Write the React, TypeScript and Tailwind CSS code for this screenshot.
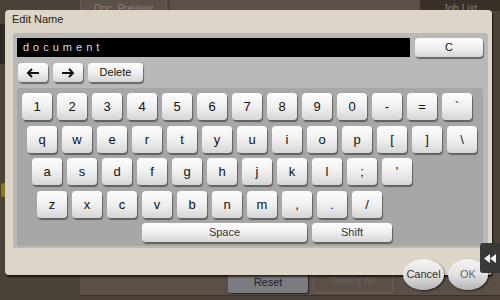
import React from "react";

const rows: { keys: string[]; pl: string; mt: string }[] = [
  { keys: ["1", "2", "3", "4", "5", "6", "7", "8", "9", "0", "-", "=", "`"], pl: "pl-[5px]", mt: "mt-[5px]" },
  { keys: ["q", "w", "e", "r", "t", "y", "u", "i", "o", "p", "[", "]", "\\"], pl: "pl-[10px]", mt: "mt-[6px]" },
  { keys: ["a", "s", "d", "f", "g", "h", "j", "k", "l", ";", "'"], pl: "pl-[15px]", mt: "mt-[5px]" },
  { keys: ["z", "x", "c", "v", "b", "n", "m", ",", ".", "/"], pl: "pl-[20px]", mt: "mt-[6px]" },
];

const keyCls =
  "flex items-center justify-center rounded-[4px] bg-gradient-to-b from-[#fdfdfd] via-[#f0f0f0] to-[#d6d6d6] shadow-[1px_2px_1px_rgba(40,40,40,0.55)] text-[#111]";

function Key({ label }: { label: string }) {
  return <div className={`${keyCls} w-[30px] h-[27px] text-[13px]`}>{label}</div>;
}

export default function App() {
  return (
    <div
      className="relative w-[500px] h-[300px] overflow-hidden bg-[#4b4239]"
      style={{ fontFamily: '"Liberation Sans", Arial, sans-serif' }}
    >
      {/* background app content */}
      <div className="absolute left-0 top-[24px] w-[6px] h-[40px] bg-[#2e2924]" />
      <div className="absolute left-[80px] top-0 w-[87px] h-[11px] bg-[#5a5048] border-x border-b border-dashed border-[#6d6259] text-[10px] text-[#8a8077] flex justify-center leading-[18px] overflow-hidden">
        Doc. Preview
      </div>
      <div className="absolute left-[170px] top-0 w-[250px] h-[11px] bg-[#5a5048]" />
      <div className="absolute left-[420px] top-0 w-[80px] h-[11px] bg-[#3a302a] text-[10px] text-[#8a8077] flex justify-center leading-[18px] overflow-hidden">
        Job List
      </div>
      <div className="absolute left-[1px] top-[183px] w-[5px] h-[14px] rounded-full bg-[#8a7a20]" />
      <div className="absolute left-[80px] top-[272px] w-[420px] h-[24px] bg-[#5a5048] border-b border-[#3a322c]" />
      <div className="absolute left-[228px] top-[272px] w-[80px] h-[21px] rounded-[3px] bg-[#7b7b82] shadow-[1px_1px_1px_rgba(0,0,0,0.6)] text-[11px] text-[#222] flex items-end justify-center pb-[3px]">
        Reset
      </div>
      <div className="absolute left-[313px] top-[272px] w-[80px] h-[21px] rounded-[3px] border border-[#6a6058] text-[11px] text-[#6a6058] flex items-end justify-center pb-[3px]">
        Select All
      </div>

      {/* dialog */}
      <div className="absolute left-[5px] top-[10px] w-[487px] h-[265px] rounded-[4px] bg-[#ddd5c7] shadow-[1px_2px_2px_rgba(0,0,0,0.7)] flex flex-col">
        <div className="h-[23px] pl-[7px] pt-[2px] text-[11px] text-[#222] leading-[14px]">Edit Name</div>
        <div className="ml-[8px] w-[475px] h-[215px] rounded-[3px] bg-[#b9b9b9] flex flex-col">
          <div className="flex pt-[5px] pl-[4px]">
            <div className="w-[393px] h-[19px] bg-black text-[11px] text-[#dcdcdc] tracking-[4px] pl-[6px] leading-[19px]">
              document
            </div>
            <div className={`${keyCls} ml-[5px] w-[68px] h-[19px] text-[11px]`}>C</div>
          </div>
          <div className="flex gap-[5px] pt-[6px] pl-[5px]">
            <div className={`${keyCls} w-[30px] h-[19px]`}>
              <svg width="14" height="10" viewBox="0 0 14 10">
                <path d="M13 5H2M6 1L2 5l4 4" stroke="#111" strokeWidth="2" fill="none" />
              </svg>
            </div>
            <div className={`${keyCls} w-[30px] h-[19px]`}>
              <svg width="14" height="10" viewBox="0 0 14 10">
                <path d="M1 5h11M8 1l4 4-4 4" stroke="#111" strokeWidth="2" fill="none" />
              </svg>
            </div>
            <div className={`${keyCls} w-[55px] h-[19px] text-[11px]`}>Delete</div>
          </div>
          <div className="mt-[6px] ml-[4px] w-[466px] h-[158px] rounded-[3px] bg-[#a7a7a7] flex flex-col">
            {rows.map((r, i) => (
              <div key={i} className={`flex gap-[5px] ${r.pl} ${r.mt}`}>
                {r.keys.map((k) => (
                  <Key key={k} label={k} />
                ))}
              </div>
            ))}
            <div className="flex gap-[5px] pl-[125px] mt-[5px]">
              <div className={`${keyCls} w-[165px] h-[19px] text-[11px] text-[#333]`}>Space</div>
              <div className={`${keyCls} w-[80px] h-[19px] text-[11px] text-[#333]`}>Shift</div>
            </div>
          </div>
        </div>
      </div>

      {/* Cancel / OK */}
      <div className="absolute left-[403px] top-[259px] w-[41px] h-[31px] rounded-[50%] bg-gradient-to-b from-[#f4f4f4] via-[#e2e2e2] to-[#b5b5b5] shadow-[1px_1px_2px_rgba(0,0,0,0.6)] flex items-center justify-center text-[11px] text-[#333]">
        Cancel
      </div>
      <div className="absolute left-[448px] top-[259px] w-[40px] h-[31px] rounded-[50%] bg-gradient-to-b from-[#f4f4f4] via-[#e2e2e2] to-[#b5b5b5] shadow-[1px_1px_2px_rgba(0,0,0,0.6)] flex items-center justify-center text-[11px] text-[#666]">
        OK
      </div>

      {/* side tab */}
      <div className="absolute left-[480px] top-[243px] w-[20px] h-[30px] rounded-l-[3px] bg-[#3b3937] flex items-center justify-center">
        <svg width="12" height="9" viewBox="0 0 12 9">
          <path d="M6 0L0 4.5 6 9zM12 0L6 4.5 12 9z" fill="#f2f2f2" />
        </svg>
      </div>
    </div>
  );
}
